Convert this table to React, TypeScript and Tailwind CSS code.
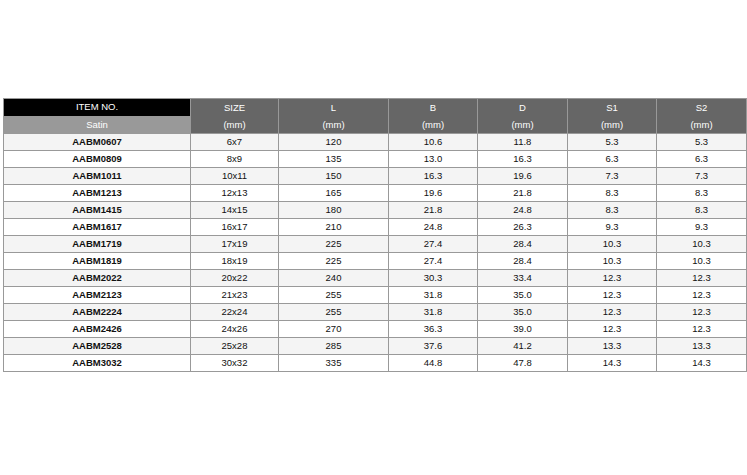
const rows: string[][] = [
  ["AABM0607", "6x7", "120", "10.6", "11.8", "5.3", "5.3"],
  ["AABM0809", "8x9", "135", "13.0", "16.3", "6.3", "6.3"],
  ["AABM1011", "10x11", "150", "16.3", "19.6", "7.3", "7.3"],
  ["AABM1213", "12x13", "165", "19.6", "21.8", "8.3", "8.3"],
  ["AABM1415", "14x15", "180", "21.8", "24.8", "8.3", "8.3"],
  ["AABM1617", "16x17", "210", "24.8", "26.3", "9.3", "9.3"],
  ["AABM1719", "17x19", "225", "27.4", "28.4", "10.3", "10.3"],
  ["AABM1819", "18x19", "225", "27.4", "28.4", "10.3", "10.3"],
  ["AABM2022", "20x22", "240", "30.3", "33.4", "12.3", "12.3"],
  ["AABM2123", "21x23", "255", "31.8", "35.0", "12.3", "12.3"],
  ["AABM2224", "22x24", "255", "31.8", "35.0", "12.3", "12.3"],
  ["AABM2426", "24x26", "270", "36.3", "39.0", "12.3", "12.3"],
  ["AABM2528", "25x28", "285", "37.6", "41.2", "13.3", "13.3"],
  ["AABM3032", "30x32", "335", "44.8", "47.8", "14.3", "14.3"],
];

const heads = ["SIZE", "L", "B", "D", "S1", "S2"];
const widths = [187, 88, 110, 89, 90, 89, 90];

export default function App() {
  return (
    <div className="min-h-[475px] bg-white pt-[98px] pl-[3px] font-['Liberation_Sans',Arial,sans-serif] text-[9.5px] text-[#111]">
      <table className="table-fixed border-collapse w-[744px]">
        <colgroup>
          {widths.map((w, i) => (
            <col key={i} style={{ width: w }} />
          ))}
        </colgroup>
        <thead>
          <tr className="h-[17px]">
            <th className="border border-[#999] bg-black text-white font-normal p-0 leading-[16px]">
              ITEM NO.
            </th>
            {heads.map((h) => (
              <th
                key={h}
                rowSpan={2}
                className="border border-[#999] bg-[#666] text-white font-normal p-0 leading-[17px]"
              >
                {h}
                <br />
                (mm)
              </th>
            ))}
          </tr>
          <tr className="h-[17px]">
            <th className="border border-[#999] bg-[#999] text-white font-normal p-0 leading-[16px]">
              Satin
            </th>
          </tr>
        </thead>
        <tbody>
          {rows.map((r, i) => (
            <tr key={r[0]} className={`h-[17px] ${i % 2 === 0 ? "bg-[#f4f4f4]" : "bg-white"}`}>
              {r.map((c, j) => (
                <td
                  key={j}
                  className={`border border-[#999] p-0 text-center leading-[16px] ${j === 0 ? "font-bold" : ""}`}
                >
                  {c}
                </td>
              ))}
            </tr>
          ))}
        </tbody>
      </table>
    </div>
  );
}
